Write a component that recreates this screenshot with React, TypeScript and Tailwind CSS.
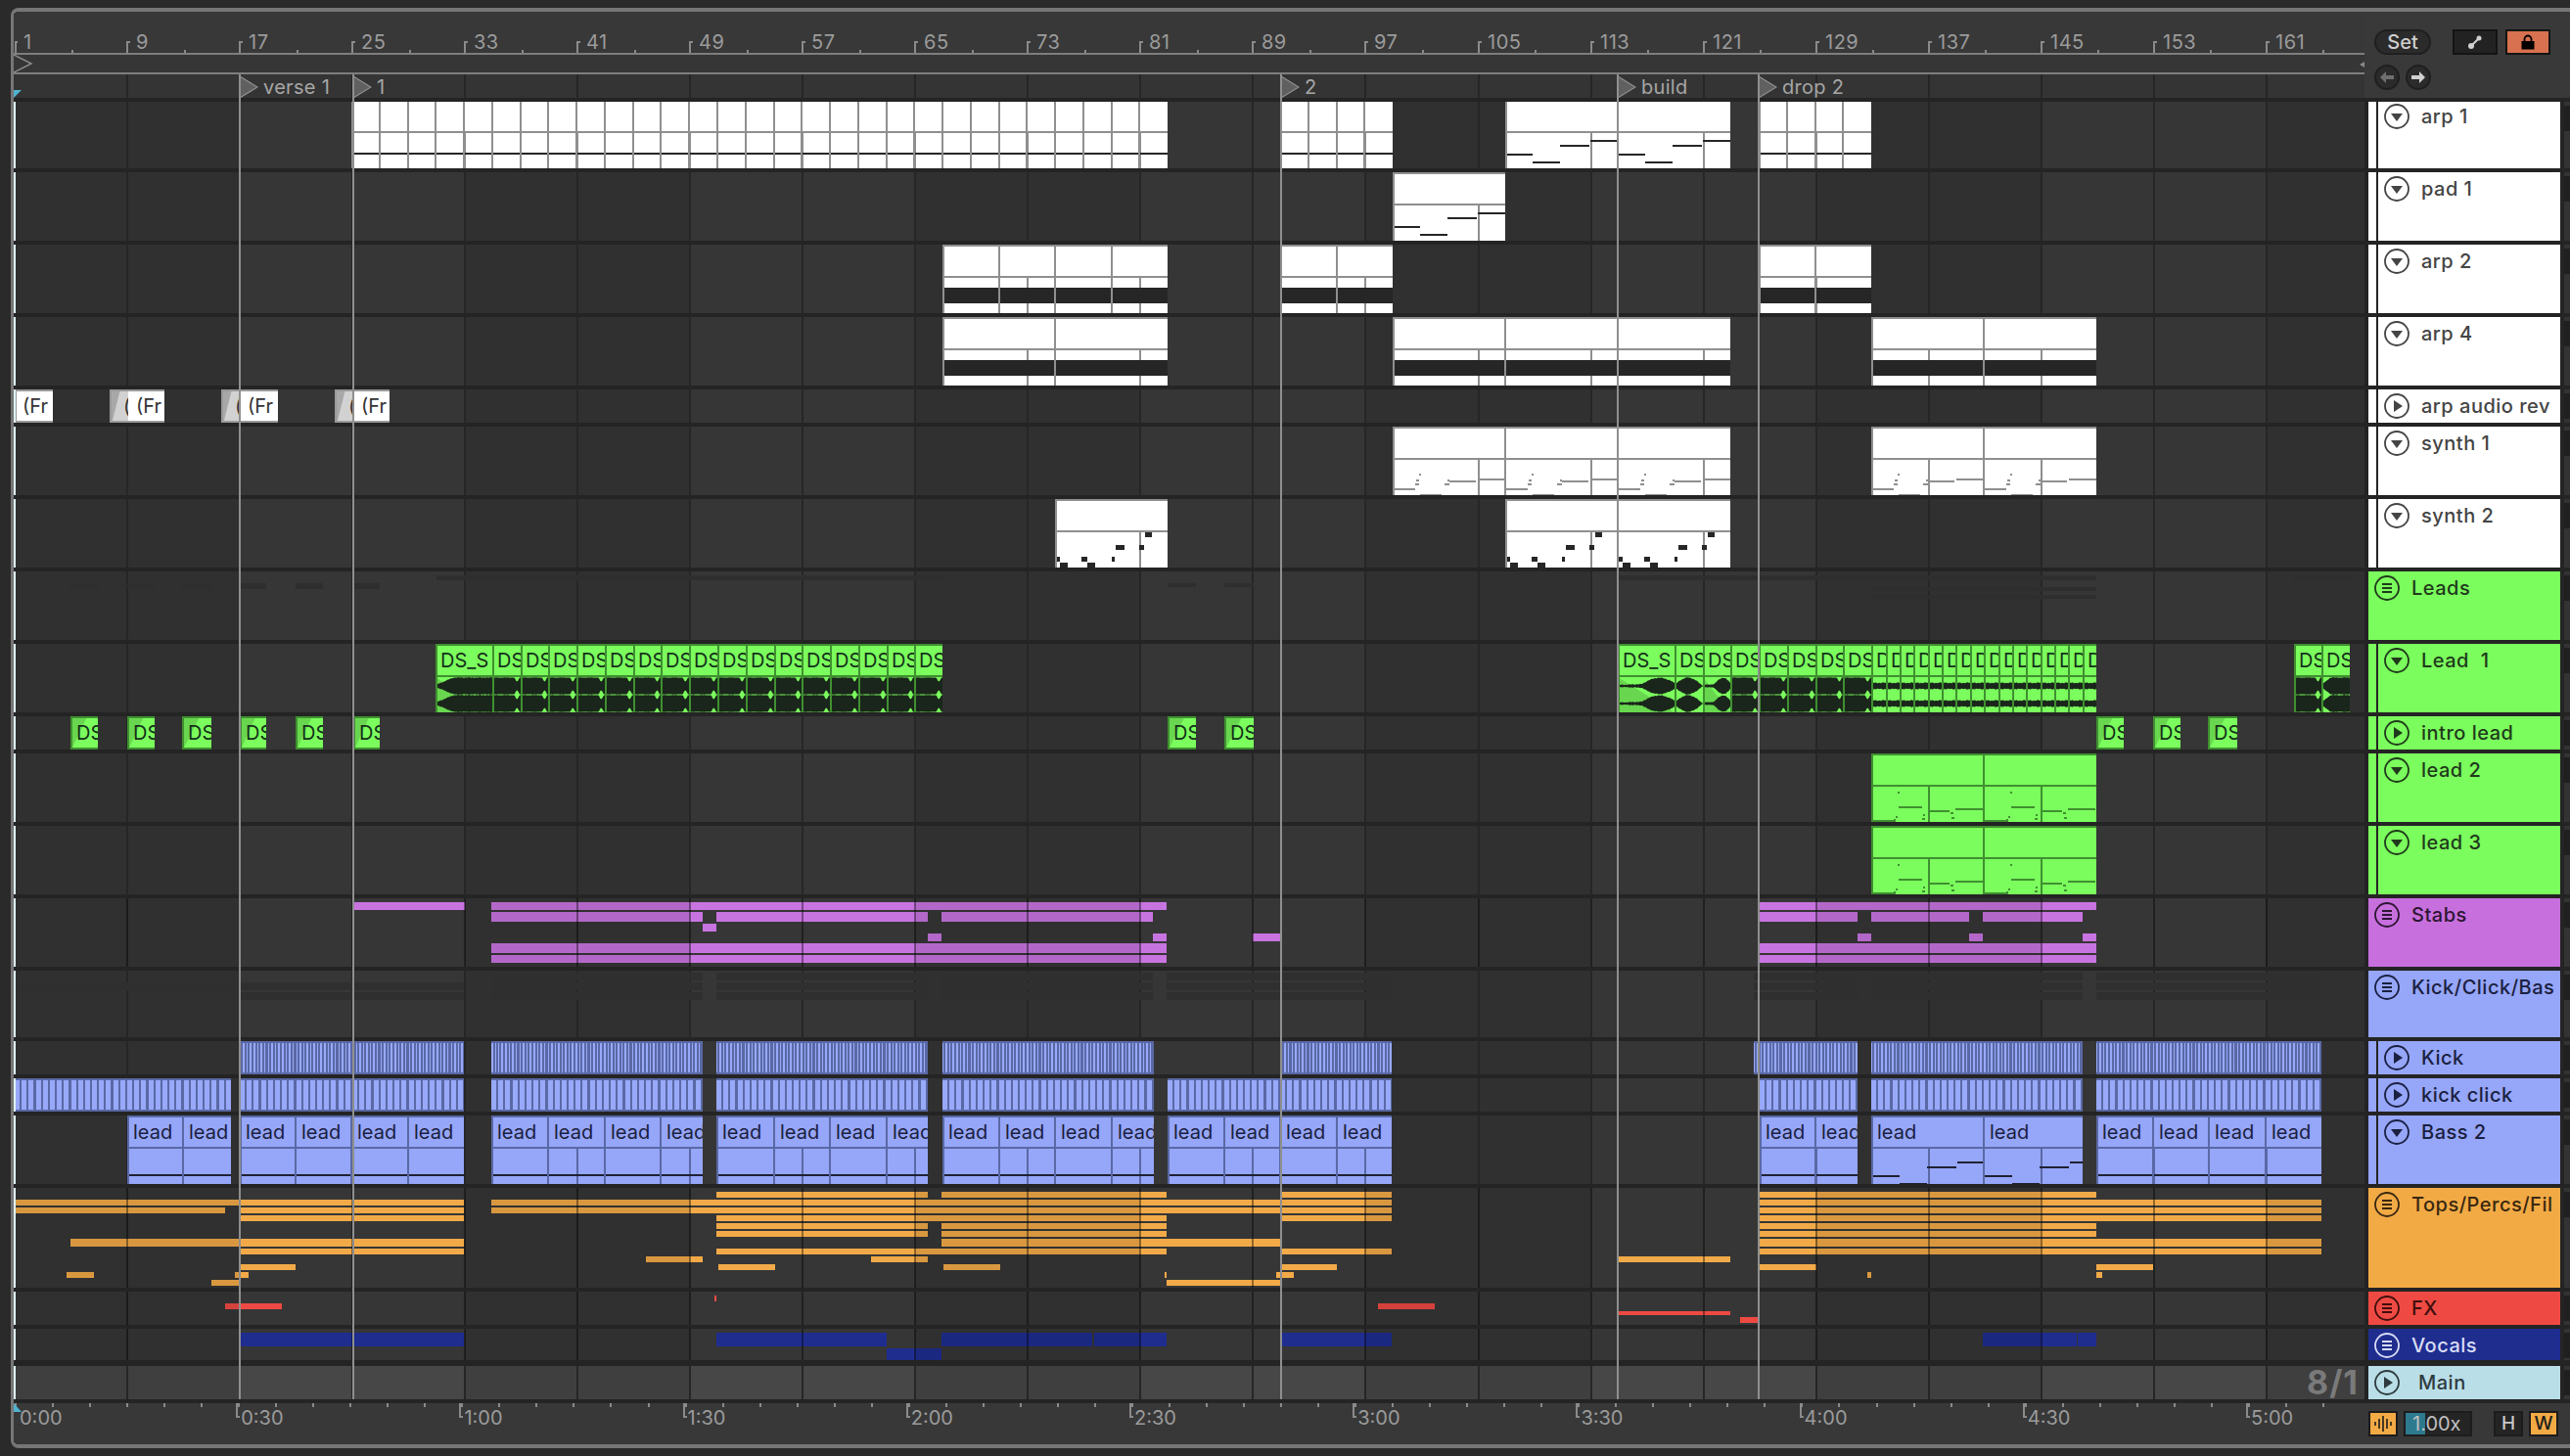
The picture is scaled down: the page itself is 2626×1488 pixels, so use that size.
import React from 'react';

type Theme = 'white' | 'green' | 'blue';
type Note = { x0: number; x1: number; y: number; h: number; c?: string };
type Rect = [number, number, number, number];

// bar number to page x, clips sit a pixel left of the bar lines
const b = (bar: number) => Math.floor(14.5 + (bar - 1) * 14.38);
const barLine = (bar: number) => Math.round(15 + (bar - 1) * 14.38);
const range = (from: number, to: number, step: number) => {
  const out: number[] = [];
  for (let i = from; i <= to; i += step) out.push(i);
  return out;
};

const GRID = range(9, 165, 8).map(barLine);
const BANDS = [15, 475, 935, 1395, 1855, 2315];
const CUES = [
  { x: 244, label: 'verse 1' },
  { x: 360, label: '1' },
  { x: 1308, label: '2' },
  { x: 1652, label: 'build' },
  { x: 1796, label: 'drop 2' },
];

const THEMES = {
  white: { bg: 'bg-white', line: 'bg-[#8f8f8f]', text: 'text-[#333333]', note: 'bg-[#262626]' },
  green: { bg: 'bg-[#7bfd5d]', line: 'bg-[#3f9030]', text: 'text-[#14301a]', note: 'bg-[#3f9030]' },
  blue: { bg: 'bg-[#96a6f8]', line: 'bg-[#5a69a5]', text: 'text-[#1a2040]', note: 'bg-[#1f2233]' },
};

const Clip = ({
  x0, x1, theme, div = [], labels, titleH = 32, notes = [], noTop,
}: {
  x0: number; x1: number; theme: Theme; div?: number[]; labels?: string; titleH?: number; notes?: Note[]; noTop?: boolean;
}) => {
  const t = THEMES[theme];
  const cells = [x0, ...div];
  return (
    <div className={`absolute inset-y-0 overflow-hidden ${t.bg}`} style={{ left: x0 - 14, width: x1 - x0 }}>
      {labels && cells.map((c, i) => (
        <div
          key={c}
          className={`absolute top-0 overflow-hidden whitespace-nowrap text-[20px] leading-[34px] ${t.text}`}
          style={{ left: c - x0 + 6, width: (cells[i + 1] ?? x1) - c - 6 }}
        >
          {labels}
        </div>
      ))}
      {GRID.filter((g) => g > x0 + 2 && g < x1 - 2).map((g) => (
        <div key={g} className={`absolute bottom-0 w-0.5 ${t.line}`} style={{ left: g - x0 - 1, top: titleH }} />
      ))}
      {notes.map((n, i) => (
        <div
          key={i}
          className={`absolute ${n.c ?? t.note}`}
          style={{ left: n.x0 - x0, width: n.x1 - n.x0, top: n.y, height: n.h }}
        />
      ))}
      {div.map((d) => (
        <div key={d} className={`absolute inset-y-0 w-0.5 ${t.line}`} style={{ left: d - x0 - 1 }} />
      ))}
      <div className={`absolute inset-x-0 h-0.5 ${t.line}`} style={{ top: titleH }} />
      <div className={`absolute inset-y-0 left-0 w-0.5 ${t.line}`} />
      {!noTop && <div className={`absolute inset-x-0 top-0 h-0.5 ${t.line}`} />}
    </div>
  );
};

const Bars = ({ rects, color }: { rects: Rect[]; color: string }) => (
  <>
    {rects.map(([x0, x1, y, h], i) => (
      <div key={i} className={`absolute ${color}`} style={{ left: x0 - 14, width: x1 - x0, top: y, height: h }} />
    ))}
  </>
);

// a fake stereo peak envelope, dark on the green clip
const envelope = (kind: string, t: number, i: number) => {
  const jitter = Math.sin(i * 1.7) * 0.5 + Math.sin(i * 0.6) * 0.4;
  if (kind === 'block') return (t > 0.78 && t < 0.96 ? 8.6 - 4 * Math.sin((Math.PI * (t - 0.78)) / 0.18) : 8.6) + jitter * 0.3;
  if (kind === 'rise') return 1 + 7.6 * Math.min(1, t / 0.32) + jitter * 0.4;
  if (kind === 'swell') return 1 + 7.5 * Math.sin(Math.PI * Math.min(1, t * 1.05)) + jitter * 0.6;
  if (kind === 'ramp') return (t < 0.42 ? 1 + t * 2 : 1.8 + 6.5 * Math.sin((Math.PI * (t - 0.42)) / 0.62)) + jitter * 0.5;
  return 3.2 + jitter * 0.7;
};

const Wave = ({ w, kind }: { w: number; kind: string }) => {
  const lane = (cy: number) => {
    const top: string[] = [];
    const bottom: string[] = [];
    for (let i = 0; i <= w; i++) {
      const a = Math.max(0.6, envelope(kind, i / w, i));
      top.push(`${i},${(cy - a).toFixed(1)}`);
      bottom.unshift(`${i},${(cy + a).toFixed(1)}`);
    }
    return [...top, ...bottom].join(' ');
  };
  return (
    <svg className="absolute left-0 top-[34px]" width={w} height={36}>
      <polygon points={lane(9)} fill="#1a261b" />
      <polygon points={lane(27)} fill="#1a261b" />
    </svg>
  );
};

const AudioCell = ({ x0, x1, label, kind, fade }: { x0: number; x1: number; label: string; kind: string; fade?: boolean }) => (
  <div className="absolute inset-y-0 overflow-hidden bg-[#7bfd5d]" style={{ left: x0 - 14, width: x1 - x0 }}>
    <div className="absolute left-[5px] top-0 whitespace-nowrap text-[20px] leading-[34px] text-[#14301a]">{label}</div>
    {fade && <div className="absolute inset-x-0 bottom-0 top-[34px] bg-black/15 [clip-path:polygon(0_0,100%_100%,0_100%)]" />}
    <Wave w={x1 - x0} kind={kind} />
    <div className="absolute inset-x-0 top-[32px] h-0.5 bg-[#3f9030]" />
    <div className="absolute inset-y-0 left-0 w-0.5 bg-[#3f9030]" />
    <div className="absolute inset-x-0 top-0 h-0.5 bg-[#3f9030]" />
  </div>
);

const MiniDS = ({ x0, x1 }: { x0: number; x1: number }) => (
  <div className="absolute inset-y-0 overflow-hidden border-2 border-r-0 border-[#3f9030] bg-[#7bfd5d]" style={{ left: x0 - 14, width: x1 - x0 }}>
    <div className="absolute inset-0 bg-black/15 [clip-path:polygon(0_0,55%_0,0_100%)]" />
    <div className="absolute left-[4px] top-0 whitespace-nowrap text-[20px] leading-[30px] text-[#14301a]">DS</div>
  </div>
);

const FrClip = ({ x0, split, x1 }: { x0: number; split: number; x1: number }) => (
  <div className="absolute inset-y-0 overflow-hidden border-y-2 border-[#9a9a9a] bg-white" style={{ left: x0 - 14, width: x1 - x0 }}>
    {split > x0 && (
      <div className="absolute inset-y-0 left-0 bg-[#d2d2d2]" style={{ width: split - x0 }}>
        <div className="absolute inset-0 bg-[#a8a8a8] [clip-path:polygon(0_0,55%_0,15%_100%,0_100%)]" />
        <div className="absolute right-0 top-0 w-[5px] overflow-hidden text-[20px] leading-[30px] text-[#333333]">(</div>
      </div>
    )}
    <div className="absolute top-0 whitespace-nowrap text-[20px] leading-[30px] text-[#333333]" style={{ left: split - x0 + 8 }}>(Fr</div>
    <div className="absolute inset-y-0 left-0 w-0.5 bg-[#9a9a9a]" />
  </div>
);

const Lane = ({ h, over, bg = 'bg-[#363636]', children }: { h: string; over?: boolean; bg?: string; children?: React.ReactNode }) => {
  const shade = BANDS.map((x) => (
    <div key={x} className="absolute inset-y-0 bg-black/10" style={{ left: x - 14, width: Math.min(230, 2416 - x) }} />
  ));
  const lines = GRID.map((g) => (
    <div key={g} className={`absolute inset-y-0 w-0.5 ${over ? 'bg-black/40' : 'bg-[#262626]'}`} style={{ left: g - 15 }} />
  ));
  return (
    <div className={`relative w-full shrink-0 overflow-hidden ${h} ${bg}`}>
      {!over && shade}
      {!over && lines}
      {children}
      {over && shade}
      {over && lines}
      <div className="absolute inset-y-0 left-0 w-0.5 bg-[#dff2f7]" />
    </div>
  );
};

const synthNotes = (s: number, y = 0): Note[] => {
  const c = 'bg-[#8f8f8f]';
  const rows: Rect[] = [
    [58, 85, 55, 2], [87, 115, 53, 2], [0, 20, 63, 2], [28, 50, 69, 2],
    [27, 29, 48, 2], [24, 27, 54, 2], [23, 27, 58, 2], [20, 23, 63, 2], [53, 58, 58, 2], [56, 58, 54, 2],
  ];
  return rows.map(([a, e, t, h]) => ({ x0: s + a, x1: s + e, y: t + y, h, c }));
};
const chordNotes = (s: number, c?: string): Note[] =>
  ([[0, 28, 55], [28, 56, 63], [56, 86, 46], [87, 115, 41]] as number[][]).map(([a, e, t]) => ({ x0: s + a, x1: s + e, y: t, h: 2, c }));
const stabNotes = (s: number): Note[] =>
  ([[92, 99, 34], [62, 71, 47], [86, 91, 47], [1, 5, 59], [27, 33, 59], [58, 61, 59], [5, 13, 65], [33, 41, 65]] as number[][]).map(
    ([a, e, t]) => ({ x0: s + a, x1: s + e, y: t, h: 5 }),
  );
const greenNotes = (s: number): Note[] => {
  const c = 'bg-[#3f9030]';
  const rows: number[][] = [
    [28, 52, 54, 2], [59, 80, 58, 2], [86, 114, 56, 2], [1, 25, 68, 2],
    [25, 27, 64, 2], [23, 25, 67, 2], [27, 29, 39, 2], [53, 55, 62, 2], [52, 55, 66, 2], [81, 84, 60, 2], [82, 85, 65, 2],
  ];
  return rows.map(([a, e, t, h]) => ({ x0: s + a, x1: s + e, y: t, h, c }));
};
const band = (x0: number, x1: number): Note => ({ x0, x1, y: 44, h: 16 });
const line = (x0: number, x1: number, y: number): Note => ({ x0, x1, y, h: 2 });

const KICK = 'bg-[repeating-linear-gradient(90deg,#98a9fa_0_1.5px,#5a69a5_1.5px_3.5px,#98a9fa_3.5px_5px,#5a69a5_5px_7px,#98a9fa_7px_8.5px,#5a69a5_8.5px_10.5px,#98a9fa_10.5px_12px,#5a69a5_12px_14.38px)]';
const CLICK = 'bg-[repeating-linear-gradient(90deg,#98a9fa_0_5px,#5a69a5_5px_7.19px)]';

const Stripes = ({ spans, cls }: { spans: number[][]; cls: string }) => (
  <>
    {spans.map(([x0, x1]) => (
      <div key={x0} className={`absolute inset-y-0 border-y-2 border-[#5a69a5] ${cls}`} style={{ left: x0 - 14, width: x1 - x0 }} />
    ))}
  </>
);

const ORANGE: Rect[] = [
  [732, 948, 4, 6], [962, 1192, 4, 6], [1310, 1422, 4, 6], [1798, 2142, 4, 6],
  [16, 474, 12, 6], [502, 1422, 12, 6], [1798, 2372, 12, 6],
  [16, 230, 20, 6], [245, 474, 20, 6], [502, 1422, 20, 6], [1798, 2372, 20, 6],
  [245, 474, 28, 6], [732, 1192, 28, 6], [1310, 1422, 28, 6], [1798, 2372, 28, 6],
  [732, 948, 36, 6], [962, 1192, 36, 6], [1798, 2142, 36, 6],
  [732, 948, 44, 6], [962, 1192, 44, 6], [1798, 2142, 44, 6],
  [72, 474, 52, 8], [962, 1308, 52, 8], [1798, 2372, 52, 8],
  [245, 474, 62, 6], [732, 1192, 62, 6], [1310, 1422, 62, 6], [1798, 2372, 62, 6],
  [660, 718, 70, 6], [890, 948, 70, 6], [1654, 1768, 70, 6],
  [245, 302, 78, 6], [734, 792, 78, 6], [964, 1022, 78, 6], [1310, 1366, 78, 6], [1798, 1856, 78, 6], [2142, 2200, 78, 6],
  [68, 96, 86, 6], [240, 254, 86, 6], [1190, 1192, 86, 6], [1304, 1322, 86, 6], [1908, 1912, 86, 6], [2142, 2148, 86, 6],
  [216, 245, 94, 6], [1192, 1308, 94, 6],
];
const PURPLE: Rect[] = [
  [361, 475, 4, 8],
  [502, 1192, 4, 8], [502, 718, 14, 10], [732, 948, 14, 10], [962, 1178, 14, 10],
  [718, 732, 26, 8], [948, 962, 36, 8], [1178, 1192, 36, 8], [1280, 1308, 36, 8],
  [502, 1192, 46, 10], [502, 1192, 58, 8],
  [1798, 2142, 4, 8], [1798, 1898, 14, 10], [1912, 2012, 14, 10], [2026, 2128, 14, 10],
  [1898, 1912, 36, 8], [2012, 2026, 36, 8], [2128, 2142, 36, 8],
  [1798, 2142, 46, 10], [1798, 2142, 58, 8],
];
const FAINT_LEADS: Rect[] = [
  [72, 100, 12, 6], [130, 158, 12, 6], [186, 216, 12, 6], [245, 272, 12, 6], [302, 330, 12, 6], [361, 388, 12, 6],
  [446, 963, 4, 5], [1654, 2142, 4, 5], [1912, 2142, 16, 4], [1912, 2142, 24, 4], [2344, 2402, 4, 5],
  [1193, 1222, 12, 4], [1251, 1281, 12, 4],
];
const FAINT_KICK: Rect[] = [
  [502, 718, 2, 8], [732, 948, 2, 8], [962, 1178, 2, 8], [1192, 1422, 2, 8], [1792, 1898, 2, 8], [1912, 2128, 2, 8], [2142, 2372, 2, 8],
  [15, 236, 12, 8], [245, 474, 12, 8], [502, 718, 12, 8], [732, 948, 12, 8], [962, 1178, 12, 8], [1192, 1422, 12, 8], [1792, 1898, 12, 8], [1912, 2128, 12, 8], [2142, 2372, 12, 8],
  [245, 474, 22, 8], [502, 718, 22, 8], [732, 948, 22, 8], [962, 1178, 22, 8], [1192, 1422, 22, 8], [1792, 1898, 22, 8], [1912, 2128, 22, 8], [2142, 2372, 22, 8],
];
const FX: Rect[] = [[230, 288, 12, 6], [730, 732, 4, 6], [1408, 1466, 12, 6], [1654, 1768, 20, 4], [1778, 1796, 26, 6]];
const VOCALS: Rect[] = [
  [245, 474, 4, 14], [732, 906, 4, 14], [906, 962, 20, 12], [962, 1116, 4, 14], [1118, 1192, 4, 14], [1310, 1422, 4, 14], [2026, 2122, 4, 14], [2123, 2142, 4, 14],
];

const LeadCells = () => (
  <>
    <AudioCell x0={b(31)} x1={b(35)} label="DS_S" kind="rise" fade />
    {range(35, 65, 2).map((bar) => <AudioCell key={bar} x0={b(bar)} x1={b(bar + 2)} label="DS" kind="block" />)}
    <AudioCell x0={b(115)} x1={b(119)} label="DS_S" kind="ramp" fade />
    <AudioCell x0={b(119)} x1={b(121)} label="DS" kind="swell" />
    <AudioCell x0={b(121)} x1={b(123)} label="DS" kind="ramp" fade />
    {range(123, 131, 2).map((bar) => <AudioCell key={bar} x0={b(bar)} x1={b(bar + 2)} label="DS" kind="block" />)}
    {range(133, 148, 1).map((bar) => <AudioCell key={bar} x0={b(bar)} x1={b(bar + 1)} label="D" kind="thin" />)}
    <AudioCell x0={b(163)} x1={b(165)} label="DS" kind="block" />
    <AudioCell x0={b(165)} x1={b(167)} label="DS" kind="rise" />
  </>
);

const KICK_SPANS = [[245, 474], [502, 718], [732, 948], [963, 1179], [1309, 1422], [1792, 1898], [1912, 2128], [2142, 2372]];
const CLICK_SPANS = [[15, 236], [245, 474], [502, 718], [732, 948], [963, 1179], [1193, 1422], [1798, 1898], [1912, 2128], [2142, 2372]];
const DS_SPANS = [[72, 100], [130, 158], [186, 216], [245, 272], [302, 330], [361, 388], [1193, 1222], [1251, 1281], [2142, 2170], [2200, 2228], [2256, 2286]];

const TRACKS: {
  name: string; h: string; over?: boolean; laneBg?: string; color: string; icon: 'down' | 'group' | 'play'; nested?: boolean; pad?: string; nameX?: string; lane?: React.ReactNode;
}[] = [
  {
    name: 'arp 1', h: 'h-[68px]', color: 'bg-white text-[#444444]', icon: 'down', nested: true, pad: 'mt-0.5',
    lane: (
      <>
        <Clip x0={b(25)} x1={b(83)} theme="white" titleH={30} noTop div={range(27, 81, 2).map(b)} notes={[line(b(25), b(83), 52)]} />
        <Clip x0={b(91)} x1={b(99)} theme="white" titleH={30} noTop div={[93, 95, 97].map(b)} notes={[line(b(91), b(99), 52)]} />
        <Clip x0={b(107)} x1={b(123)} theme="white" titleH={30} noTop div={[b(115)]} notes={[...chordNotes(b(107)).map((n) => ({ ...n, y: n.y - 2 })), ...chordNotes(b(115)).map((n) => ({ ...n, y: n.y - 2 }))]} />
        <Clip x0={b(125)} x1={b(133)} theme="white" titleH={30} noTop div={[127, 129, 131].map(b)} notes={[line(b(125), b(133), 52)]} />
      </>
    ),
  },
  {
    name: 'pad 1', h: 'h-[70px]', color: 'bg-white text-[#444444]', icon: 'down', nested: true,
    lane: <Clip x0={b(99)} x1={b(107)} theme="white" notes={chordNotes(b(99))} />,
  },
  {
    name: 'arp 2', h: 'h-[70px]', color: 'bg-white text-[#444444]', icon: 'down', nested: true,
    lane: (
      <>
        <Clip x0={b(67)} x1={b(83)} theme="white" div={[71, 75, 79].map(b)} notes={[band(b(67), b(83))]} />
        <Clip x0={b(91)} x1={b(99)} theme="white" div={[b(95)]} notes={[band(b(91), b(99))]} />
        <Clip x0={b(125)} x1={b(133)} theme="white" div={[b(129)]} notes={[band(b(125), b(133))]} />
      </>
    ),
  },
  {
    name: 'arp 4', h: 'h-[70px]', color: 'bg-white text-[#444444]', icon: 'down', nested: true,
    lane: (
      <>
        <Clip x0={b(67)} x1={b(83)} theme="white" div={[b(75)]} notes={[band(b(67), b(83))]} />
        <Clip x0={b(99)} x1={b(123)} theme="white" div={[b(107), b(115)]} notes={[band(b(99), b(123))]} />
        <Clip x0={b(133)} x1={b(149)} theme="white" div={[b(141)]} notes={[band(b(133), b(149))]} />
      </>
    ),
  },
  {
    name: 'arp audio rev', h: 'h-[34px]', color: 'bg-white text-[#444444]', icon: 'play', nested: true,
    lane: (
      <>
        <FrClip x0={15} split={15} x1={54} />
        <FrClip x0={112} split={131} x1={168} />
        <FrClip x0={226} split={245} x1={284} />
        <FrClip x0={342} split={361} x1={398} />
      </>
    ),
  },
  {
    name: 'synth 1', h: 'h-[70px]', color: 'bg-white text-[#444444]', icon: 'down', nested: true,
    lane: (
      <>
        <Clip x0={b(99)} x1={b(123)} theme="white" div={[b(107), b(115)]} notes={[...synthNotes(b(99)), ...synthNotes(b(107)), ...synthNotes(b(115))]} />
        <Clip x0={b(133)} x1={b(149)} theme="white" div={[b(141)]} notes={[...synthNotes(b(133)), ...synthNotes(b(141))]} />
      </>
    ),
  },
  {
    name: 'synth 2', h: 'h-[70px]', color: 'bg-white text-[#444444]', icon: 'down', nested: true,
    lane: (
      <>
        <Clip x0={b(75)} x1={b(83)} theme="white" notes={stabNotes(b(75))} />
        <Clip x0={b(107)} x1={b(123)} theme="white" div={[b(115)]} notes={[...stabNotes(b(107)), ...stabNotes(b(115))]} />
      </>
    ),
  },
  {
    name: 'Leads', h: 'h-[70px]', color: 'bg-[#7bfd5d] text-[#1f3a1b]', icon: 'group',
    lane: <Bars rects={FAINT_LEADS} color="bg-[#2e2e2e]" />,
  },
  { name: 'Lead  1', h: 'h-[70px]', color: 'bg-[#7bfd5d] text-[#1f3a1b]', icon: 'down', nested: true, lane: <LeadCells /> },
  {
    name: 'intro lead', h: 'h-[34px]', color: 'bg-[#7bfd5d] text-[#1f3a1b]', icon: 'play', nested: true,
    lane: <>{DS_SPANS.map(([x0, x1]) => <MiniDS key={x0} x0={x0} x1={x1} />)}</>,
  },
  {
    name: 'lead 2', h: 'h-[70px]', color: 'bg-[#7bfd5d] text-[#1f3a1b]', icon: 'down', nested: true,
    lane: <Clip x0={1912} x1={2142} theme="green" div={[b(141)]} notes={[...greenNotes(1912), ...greenNotes(2027)]} />,
  },
  {
    name: 'lead 3', h: 'h-[70px]', color: 'bg-[#7bfd5d] text-[#1f3a1b]', icon: 'down', nested: true,
    lane: <Clip x0={1912} x1={2142} theme="green" div={[b(141)]} notes={[...greenNotes(1912), ...greenNotes(2027)]} />,
  },
  {
    name: 'Stabs', h: 'h-[70px]', over: true, color: 'bg-[#c76fdd] text-[#2d1633]', icon: 'group',
    lane: <Bars rects={PURPLE} color="bg-[#c874e0]" />,
  },
  {
    name: 'Kick/Click/Bas', h: 'h-[68px]', color: 'bg-[#96a6f8] text-[#1a2040]', icon: 'group',
    lane: <Bars rects={FAINT_KICK} color="bg-[#2f2f2f]" />,
  },
  {
    name: 'Kick', h: 'h-[34px]', color: 'bg-[#96a6f8] text-[#1a2040]', icon: 'play', nested: true,
    lane: <Stripes spans={KICK_SPANS} cls={KICK} />,
  },
  {
    name: 'kick click', h: 'h-[34px]', color: 'bg-[#96a6f8] text-[#1a2040]', icon: 'play', nested: true,
    lane: <Stripes spans={CLICK_SPANS} cls={CLICK} />,
  },
  {
    name: 'Bass 2', h: 'h-[70px]', color: 'bg-[#96a6f8] text-[#1a2040]', icon: 'down', nested: true,
    lane: (
      <>
        <Clip x0={130} x1={236} theme="blue" labels="lead" div={[b(13)]} notes={[line(130, 236, 60)]} />
        <Clip x0={245} x1={474} theme="blue" labels="lead" div={[21, 25, 29].map(b)} notes={[line(245, 474, 60)]} />
        <Clip x0={502} x1={718} theme="blue" labels="lead" div={[39, 43, 47].map(b)} notes={[line(502, 718, 60)]} />
        <Clip x0={732} x1={948} theme="blue" labels="lead" div={[55, 59, 63].map(b)} notes={[line(732, 948, 60)]} />
        <Clip x0={963} x1={1179} theme="blue" labels="lead" div={[71, 75, 79].map(b)} notes={[line(963, 1179, 60)]} />
        <Clip x0={1193} x1={1422} theme="blue" labels="lead" div={[87, 91, 95].map(b)} notes={[line(1193, 1422, 60)]} />
        <Clip x0={1798} x1={1898} theme="blue" labels="lead" div={[b(129)]} notes={[line(1798, 1898, 60)]} />
        <Clip x0={1912} x1={2128} theme="blue" labels="lead" div={[b(141)]} notes={[...chordNotes(1913).map((n) => ({ ...n, y: n.y + 6 })), ...chordNotes(2028).map((n) => ({ ...n, y: n.y + 6 }))]} />
        <Clip x0={2142} x1={2372} theme="blue" labels="lead" div={[153, 157, 161].map(b)} notes={[line(2142, 2372, 60)]} />
      </>
    ),
  },
  {
    name: 'Tops/Percs/Fil', h: 'h-[102px]', over: true, color: 'bg-[#f2aa45] text-[#3a2810]', icon: 'group',
    lane: <Bars rects={ORANGE} color="bg-[#f2aa48]" />,
  },
  {
    name: 'FX', h: 'h-[34px]', over: true, color: 'bg-[#ee4a43] text-[#3f0f0d]', icon: 'group',
    lane: <Bars rects={FX} color="bg-[#ee4a43]" />,
  },
  {
    name: 'Vocals', h: 'h-[32px]', over: true, color: 'bg-[#1f2d8f] text-[#d8dcf5]', icon: 'group',
    lane: <Bars rects={VOCALS} color="bg-[#1f2d8f]" />,
  },
  {
    name: 'Main', h: 'h-[34px] mt-0.5', color: 'bg-[#b9dee8] text-[#2f3a3e]', icon: 'play', nameX: 'pl-[19px]', laneBg: 'bg-[#474747]',
    lane: <div className="absolute bottom-0 right-[6px] text-[34px] font-bold leading-[34px] tracking-[1px] text-[#7a7a7a]">8/1</div>,
  },
];

const TrackIcon = ({ kind }: { kind: 'down' | 'group' | 'play' }) => (
  <svg width="26" height="26" viewBox="0 0 26 26" className="shrink-0" fill="currentColor">
    <circle cx="13" cy="13" r="12" fill="none" stroke="currentColor" strokeWidth="1.8" />
    {kind === 'down' && <polygon points="7,10 19,10 13,18" />}
    {kind === 'play' && <polygon points="10,7 10,19 19,13" />}
    {kind === 'group' && (
      <g stroke="currentColor" strokeWidth="2">
        <line x1="8" x2="18" y1="9" y2="9" />
        <line x1="8" x2="18" y1="13" y2="13" />
        <line x1="8" x2="18" y1="17" y2="17" />
      </g>
    )}
  </svg>
);

const TrackHead = ({ t }: { t: (typeof TRACKS)[number] }) => (
  <div className={`flex w-[196px] shrink-0 overflow-hidden ${t.h} ${t.color}`}>
    {t.nested && <div className="ml-2 mr-[6px] w-0.5 shrink-0 bg-[#242424]" />}
    <div className={`flex h-[26px] items-center ${t.nested ? '' : 'ml-1.5'} ${t.pad ?? 'mt-1'}`}>
      <TrackIcon kind={t.icon} />
      <span className={`whitespace-pre pb-[1px] text-[20px] font-medium tracking-[0.5px] ${t.nameX ?? 'pl-3'}`}>{t.name}</span>
    </div>
  </div>
);

const TopRuler = () => (
  <div className="relative h-[42px] shrink-0 bg-[#383838]">
    {range(1, 161, 8).map((bar) => (
      <React.Fragment key={bar}>
        <div className="absolute bottom-0 top-[30px] w-0.5 bg-[#8a8a8a]" style={{ left: barLine(bar) - 14 - (bar === 1 ? 0 : 1) }} />
        <div className="absolute top-[30px] h-0.5 w-[3px] bg-[#8a8a8a]" style={{ left: barLine(bar) - 14 }} />
        <div className="absolute bottom-0 h-[3px] w-0.5 bg-[#8a8a8a]" style={{ left: barLine(bar + 4) - 14 }} />
        <div className="absolute top-5 text-[20px] leading-[22px] tracking-[0.5px] text-[#9b9b9b]" style={{ left: barLine(bar) - 14 + 9 }}>{bar}</div>
      </React.Fragment>
    ))}
  </div>
);

const TimeRuler = () => {
  const labels = ['0:00', '0:30', '1:00', '1:30', '2:00', '2:30', '3:00', '3:30', '4:00', '4:30', '5:00'];
  return (
    <div className="relative h-full w-[2402px] shrink-0">
      {range(0, 62, 1).map((i) => (
        <div key={i} className="absolute top-0 h-1 w-0.5 bg-[#8a8a8a]" style={{ left: 1 + i * 38.03 }} />
      ))}
      {labels.map((l, i) => (
        <React.Fragment key={l}>
          {i > 0 && <div className="absolute top-0 h-[15px] w-0.5 bg-[#8a8a8a]" style={{ left: 1 + i * 228.2 - 2 }} />}
          {i > 0 && <div className="absolute top-[13px] h-0.5 w-1 bg-[#8a8a8a]" style={{ left: 1 + i * 228.2 - 2 }} />}
          <div className="absolute top-[3px] text-[20px] leading-[24px] text-[#9b9b9b]" style={{ left: i === 0 ? 6 : 1 + i * 228.2 + 3 }}>{l}</div>
        </React.Fragment>
      ))}
      <div className="absolute left-0 top-0 h-[9px] w-2 bg-[#4fb3cf] [clip-path:polygon(0_0,100%_100%,0_100%)]" />
    </div>
  );
};

const Flag = ({ x, label }: { x: number; label: string }) => (
  <div className="absolute top-[2px] flex items-center" style={{ left: x - 14 }}>
    <svg width="20" height="22" viewBox="0 0 20 22" className="shrink-0">
      <polygon points="1,0 19,11 1,22" fill="#606060" stroke="#8f8f8f" strokeWidth="1.2" />
    </svg>
    <span className="ml-[5px] whitespace-nowrap text-[20px] leading-[22px] tracking-[0.3px] text-[#a6a6a6]">{label}</span>
  </div>
);

const App: React.FC = () => {
  return (
    <div className="h-[1488px] w-[2626px] overflow-hidden bg-[#2a2a2a] pl-[11px] pt-2 font-[Inter,sans-serif]">
      <div className="flex h-[1472px] flex-col overflow-hidden rounded-l-lg border-y-4 border-l-[3px] border-[#767676] bg-[#242424]">
        <div className="flex h-[1418px] shrink-0">

          {/* Arrangement */}
          <div className="flex w-[2402px] shrink-0 flex-col">
            <TopRuler />
            <div className="relative h-[22px] shrink-0 border-y-2 border-[#7e7e7e] bg-[#363636]">
              <svg width="20" height="18" viewBox="0 0 20 18" className="absolute left-0 top-0">
                <polyline points="0,0 18,9 0,18" fill="none" stroke="#8a8a8a" strokeWidth="1.5" />
              </svg>
              <div className="absolute right-0 top-[7px] h-0 w-0 border-y-[3px] border-r-[5px] border-y-transparent border-r-[#8a8a8a]" />
            </div>
            <div className="relative flex flex-col gap-1">
              <div className="relative h-6 shrink-0 overflow-hidden bg-[#343434]">
                {GRID.map((g) => <div key={g} className="absolute inset-y-0 w-0.5 bg-[#262626]" style={{ left: g - 15 }} />)}
                <div className="absolute left-0 top-[16px] h-2 w-2 bg-[#4fb3cf] [clip-path:polygon(0_0,100%_0,0_100%)]" />
                {CUES.map((c) => <Flag key={c.x} x={c.x} label={c.label} />)}
              </div>
              {TRACKS.map((t) => (
                <Lane key={t.name} h={t.h} over={t.over} bg={t.laneBg}>{t.lane}</Lane>
              ))}
              {CUES.map((c) => (
                <div key={c.x} className="absolute inset-y-0 w-0.5 bg-[#8f8f8f]" style={{ left: c.x - 14 }} />
              ))}
            </div>
          </div>

          {/* Track heads */}
          <div className="flex min-w-0 flex-1 flex-col gap-1">
            <div className="h-[88px] shrink-0 bg-[#393939] pl-[10px] pt-[18px]">
              <div className="flex h-[26px] items-center">
                <div className="flex h-[26px] w-[58px] items-center justify-center rounded-full border-2 border-[#1f1f1f] bg-[#2b2b2b] text-[20px] font-medium text-[#cfcfcf]">Set</div>
                <div className="ml-[22px] flex h-[26px] w-[46px] items-center justify-center border-2 border-[#141414] bg-[#222222]">
                  <svg width="16" height="16" viewBox="0 0 16 16">
                    <line x1="4" y1="12" x2="12" y2="4" stroke="#d0d0d0" strokeWidth="2" />
                    <circle cx="4" cy="12" r="3" fill="#d0d0d0" />
                    <circle cx="12" cy="4" r="2.5" fill="#d0d0d0" />
                  </svg>
                </div>
                <div className="ml-2 flex h-[26px] w-[46px] items-center justify-center border-2 border-[#141414] bg-[#d8714f]">
                  <svg width="16" height="16" viewBox="0 0 16 16">
                    <path d="M4.5 7V5a3.5 3.5 0 0 1 7 0v2" fill="none" stroke="#000" strokeWidth="1.8" />
                    <rect x="1.5" y="7" width="13" height="8.5" fill="#000" />
                  </svg>
                </div>
              </div>
              <div className="mt-2.5 flex gap-1.5">
                <div className="flex h-[26px] w-[26px] items-center justify-center rounded-full border-2 border-[#1f1f1f] bg-[#2b2b2b]">
                  <svg width="16" height="14" viewBox="0 0 16 14"><path d="M7 1 1 7l6 6V9h8V5H7z" fill="#6f6f6f" /></svg>
                </div>
                <div className="flex h-[26px] w-[26px] items-center justify-center rounded-full border-2 border-[#1f1f1f] bg-[#2b2b2b]">
                  <svg width="16" height="14" viewBox="0 0 16 14"><path d="M9 1l6 6-6 6V9H1V5h8z" fill="#d0d0d0" /></svg>
                </div>
              </div>
            </div>
            {TRACKS.map((t) => (
              <div key={t.name} className="ml-1 flex gap-1">
                <TrackHead t={t} />
                <div className={`w-[6px] shrink-0 bg-[#333333] ${t.h}`}>
                  <div className="mt-1 h-[26px] w-full bg-[#202020]" />
                </div>
              </div>
            ))}
          </div>
        </div>

        {/* Bottom bar */}
        <div className="mt-1 flex h-[42px] shrink-0 bg-[#383838]">
          <TimeRuler />
          <div className="ml-1 flex pt-2">
            <div className="flex h-[26px] w-[30px] items-center justify-center border-2 border-[#1c1c1c] bg-[#f2aa45]">
              <svg width="20" height="18" viewBox="0 0 20 18" stroke="#1c1c1c" strokeWidth="1.6">
                <line x1="2" x2="2" y1="7" y2="11" />
                <line x1="6" x2="6" y1="4" y2="14" />
                <line x1="10" x2="10" y1="1" y2="17" />
                <line x1="14" x2="14" y1="4" y2="14" />
                <line x1="18" x2="18" y1="7" y2="11" />
              </svg>
            </div>
            <div className="relative ml-1.5 h-[26px] w-[70px] border-2 border-[#1c1c1c] bg-[#242424]">
              <div className="absolute inset-y-0 left-0 w-5 bg-[#2d7a8f]" />
              <div className="absolute left-[7px] top-0 text-[20px] leading-[22px] text-[#c0c0c0]">1.00x</div>
            </div>
            <div className="ml-[22px] flex h-[26px] w-[30px] items-center justify-center border-2 border-[#1c1c1c] bg-[#242424] text-[19px] font-medium text-[#c8c8c8]">H</div>
            <div className="ml-1.5 flex h-[26px] w-[30px] items-center justify-center border-2 border-[#1c1c1c] bg-[#f2aa45] text-[19px] font-medium text-[#1c1c1c]">W</div>
          </div>
        </div>
      </div>
    </div>
  );
};

export default App;
